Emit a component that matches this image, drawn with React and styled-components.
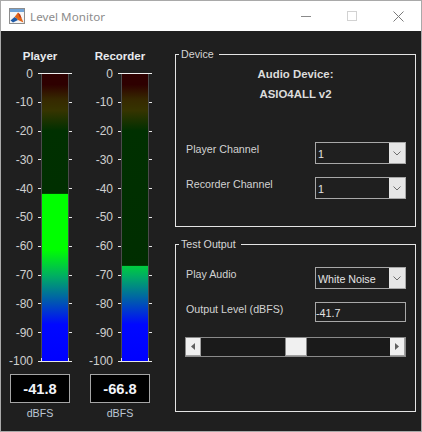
import React from "react";
import styled, { createGlobalStyle } from "styled-components";

const GlobalStyle = createGlobalStyle`
  html, body {
    margin: 0;
    padding: 0;
    background: #ffffff;
  }
  body {
    font-family: "Liberation Sans", Arial, sans-serif;
  }
`;

const meters = [
  { name: "Player", level: -41.8 },
  { name: "Recorder", level: -66.8 },
];
const ticks = [0, -10, -20, -30, -40, -50, -60, -70, -80, -90, -100];

const PLOT_H = 289;
const BAR_SPAN = 288;

const dimStops = [
  [0, "#2e0000"],
  [0.04, "#2e0000"],
  [0.09, "#362800"],
  [0.13, "#363400"],
  [0.2, "#003000"],
  [1, "#002c00"],
];
const brightStops = [
  [0, "#ff0000"],
  [0.1, "#ffff00"],
  [0.2, "#00ff00"],
  [0.61, "#00ff00"],
  [0.7, "#00b060"],
  [0.79, "#0058b0"],
  [0.87, "#0008ff"],
  [1, "#0000ff"],
];

function MeterPlot({ id, level }) {
  const fillTop = 0.5 + (-level / 100) * BAR_SPAN;
  return (
    <Plot width="34" height={PLOT_H} viewBox={`0 0 34 ${PLOT_H}`}>
      <defs>
        <linearGradient id={`dim-${id}`} gradientUnits="userSpaceOnUse" x1="0" y1="0" x2="0" y2={PLOT_H}>
          {dimStops.map(([o, c]) => <stop key={o} offset={o} stopColor={c} />)}
        </linearGradient>
        <linearGradient id={`lit-${id}`} gradientUnits="userSpaceOnUse" x1="0" y1="0" x2="0" y2={PLOT_H}>
          {brightStops.map(([o, c]) => <stop key={o} offset={o} stopColor={c} />)}
        </linearGradient>
      </defs>
      <rect x="3" y="0" width="28" height={PLOT_H} fill={`url(#dim-${id})`} />
      <rect x="3" y={fillTop} width="28" height={PLOT_H - fillTop} fill={`url(#lit-${id})`} />
      <line x1="3.5" y1="0" x2="3.5" y2="288" stroke="#4a4a4a" />
      <line x1="30.5" y1="0" x2="30.5" y2="288" stroke="#4a4a4a" />
      <line x1="0" y1="0.5" x2="34" y2="0.5" stroke="#f0f0f0" />
      {ticks.slice(1, -1).map((t, i) => {
        const y = Math.round((i + 1) * 28.8) + 0.5;
        return (
          <g key={t} stroke="#e6e6e6">
            <line x1="0" y1={y} x2="3" y2={y} />
            <line x1="31" y1={y} x2="34" y2={y} />
          </g>
        );
      })}
      <g stroke="#e6e6e6">
        <line x1="0" y1="288.5" x2="34" y2="288.5" />
        <line x1="3.5" y1="285" x2="3.5" y2="288" />
        <line x1="30.5" y1="285" x2="30.5" y2="288" />
      </g>
    </Plot>
  );
}

function Meter({ name, level }) {
  return (
    <MeterCol>
      <MeterLabel>{name}</MeterLabel>
      <Axis>
        <TickLabels>
          {ticks.map((t) => (
            <TickLabel key={t}>{t}</TickLabel>
          ))}
        </TickLabels>
        <MeterPlot id={name} level={level} />
      </Axis>
      <ValueBox>{level.toFixed(1)}</ValueBox>
      <Unit>dBFS</Unit>
    </MeterCol>
  );
}

function Chevron() {
  return (
    <svg width="8" height="5" viewBox="0 0 8 5">
      <polyline points="0.5,0.5 4,4 7.5,0.5" fill="none" stroke="#6e6e6e" strokeWidth="1" />
    </svg>
  );
}

function Dropdown({ value }) {
  return (
    <Select>
      <SelectText>{value}</SelectText>
      <SelectArrow>
        <Chevron />
      </SelectArrow>
    </Select>
  );
}

function Slider({ fraction }) {
  return (
    <SliderBox>
      <StepButton>
        <svg width="4" height="7" viewBox="0 0 4 7">
          <polygon points="4,0 0,3.5 4,7" fill="#606060" />
        </svg>
      </StepButton>
      <Track>
        <TrackSpace style={{ flexGrow: fraction }} />
        <Thumb />
        <TrackSpace style={{ flexGrow: 1 - fraction }} />
      </Track>
      <StepButton>
        <svg width="4" height="7" viewBox="0 0 4 7">
          <polygon points="0,0 4,3.5 0,7" fill="#606060" />
        </svg>
      </StepButton>
    </SliderBox>
  );
}

function MatlabIcon() {
  return (
    <svg width="16" height="16" viewBox="0 0 16 16">
      <rect x="0.5" y="0.5" width="15" height="15" fill="#f6f6f6" stroke="#8d8d8d" />
      <rect x="1" y="1" width="14" height="3" fill="#6fa3d8" />
      <polygon points="1.5,12.5 5.5,9 8,10.5 9,12 4,14.5" fill="#1f5aa6" />
      <polygon points="5.5,9 9,4.5 11,6.5 14.5,14.5 9,12 8,10.5" fill="#e2661b" />
      <polygon points="9,4.5 11,6.5 12.5,10 10.5,9" fill="#b8341a" />
    </svg>
  );
}

const App = () => {
  return (
    <>
      <GlobalStyle />
      <Window>
        <TitleBar>
          <MatlabIcon />
          <Title>Level Monitor</Title>
          <WinButtons>
            <WinButton>
              <svg width="10" height="1"><rect width="10" height="1" fill="#8a8a8a" /></svg>
            </WinButton>
            <WinButton>
              <svg width="10" height="10"><rect x="0.5" y="0.5" width="9" height="9" fill="none" stroke="#d2d2d2" /></svg>
            </WinButton>
            <WinButton>
              <svg width="11" height="11">
                <path d="M0.5 0.5 L10.5 10.5 M10.5 0.5 L0.5 10.5" stroke="#7a7a7a" strokeWidth="1" />
              </svg>
            </WinButton>
          </WinButtons>
        </TitleBar>
        <Body>
          <MeterGroup>
            {meters.map((m) => (
              <Meter key={m.name} {...m} />
            ))}
          </MeterGroup>
          <SideColumn>
            <Panel>
              <Legend>Device</Legend>
              <DeviceInfo>
                <div>Audio Device:</div>
                <div>ASIO4ALL v2</div>
              </DeviceInfo>
              <FormGrid $top={38} $bottom={27}>
                <FieldLabel>Player Channel</FieldLabel>
                <Dropdown value="1" />
                <FieldLabel>Recorder Channel</FieldLabel>
                <Dropdown value="1" />
              </FormGrid>
            </Panel>
            <Panel $gap={11}>
              <Legend>Test Output</Legend>
              <FormGrid $top={16} $bottom={0}>
                <FieldLabel>Play Audio</FieldLabel>
                <Dropdown value="White Noise" />
                <FieldLabel>Output Level (dBFS)</FieldLabel>
                <TextField>-41.7</TextField>
              </FormGrid>
              <Slider fraction={0.5} />
            </Panel>
          </SideColumn>
        </Body>
      </Window>
    </>
  );
};

const Window = styled.div`
  width: 422px;
  height: 432px;
  box-sizing: border-box;
  border: 1px solid #a9a9a9;
  display: flex;
  flex-direction: column;
  overflow: hidden;
`;

const TitleBar = styled.div`
  height: 30px;
  flex-shrink: 0;
  background: #ffffff;
  display: flex;
  align-items: center;
  padding-left: 8px;
  padding-top: 0px;
`;

const Title = styled.span`
  margin-left: 5px;
  font-family: "Noto Sans", "Open Sans", sans-serif;
  font-size: 11.6px;
  color: #8c8c8c;
  letter-spacing: 0.05px;
`;

const WinButtons = styled.div`
  margin-left: auto;
  display: flex;
  height: 100%;
`;

const WinButton = styled.div`
  width: 46px;
  height: 100%;
  display: flex;
  align-items: center;
  justify-content: center;
`;

const Body = styled.div`
  flex: 1;
  background: #1f1f1f;
  display: flex;
  padding-left: 9px;
  gap: 25px;
`;

const MeterGroup = styled.div`
  display: flex;
  gap: 20px;
`;

const MeterCol = styled.div`
  width: 60px;
  display: flex;
  flex-direction: column;
`;

const MeterLabel = styled.div`
  margin-top: 18px;
  font-size: 11.5px;
  font-weight: bold;
  line-height: 14px;
  text-align: center;
  color: #e8eaee;
`;

const Axis = styled.div`
  margin-top: 10px;
  display: flex;
  height: ${PLOT_H}px;
`;

const TickLabels = styled.div`
  width: 23px;
  flex-shrink: 0;
  display: flex;
  flex-direction: column;
  justify-content: space-between;
  padding: 0.5px 0;
  box-sizing: border-box;
`;

const TickLabel = styled.div`
  height: 0;
  display: flex;
  align-items: center;
  justify-content: flex-end;
  font-size: 12px;
  line-height: 14px;
  color: #cfcfcf;
  white-space: nowrap;
`;

const Plot = styled.svg`
  margin-left: 5px;
  flex-shrink: 0;
  display: block;
`;

const ValueBox = styled.div`
  margin-top: 12px;
  height: 29px;
  box-sizing: border-box;
  border: 1px solid #a6a6a6;
  background: #000000;
  display: flex;
  align-items: center;
  justify-content: center;
  font-size: 14.7px;
  font-weight: bold;
  color: #f2f4f8;
`;

const Unit = styled.div`
  margin-top: 3px;
  font-size: 10.7px;
  line-height: 14px;
  text-align: center;
  color: #bcc6d4;
`;

const SideColumn = styled.div`
  width: 241px;
  display: flex;
  flex-direction: column;
  padding-top: 17px;
`;

const Panel = styled.fieldset`
  margin: ${(p) => p.$gap || 0}px 0 0 0;
  padding: 0 0 0 10px;
  min-width: 0;
  border: 1px solid #e4e4e4;
  display: flex;
  flex-direction: column;
  &:last-child {
    padding-bottom: 54px;
  }
`;

const Legend = styled.legend`
  margin-left: -7px;
  padding: 0 5px 0 2px;
  font-size: 10.7px;
  line-height: 13px;
  color: #d6d6d6;
`;

const DeviceInfo = styled.div`
  padding-top: 3px;
  padding-right: 10px;
  font-size: 11.4px;
  font-weight: bold;
  line-height: 20px;
  text-align: center;
  color: #dcdcdc;
`;

const FormGrid = styled.div`
  margin-top: ${(p) => p.$top}px;
  margin-bottom: ${(p) => p.$bottom}px;
  display: grid;
  grid-template-columns: 129px 91px;
  row-gap: 13px;
  align-items: start;
`;

const FieldLabel = styled.div`
  padding-top: 1px;
  font-size: 10.7px;
  line-height: 13px;
  color: #d2d2d2;
  white-space: nowrap;
`;

const Select = styled.div`
  height: 22px;
  box-sizing: border-box;
  border: 1px solid #a8a8a8;
  background: #1f1f1f;
  display: flex;
`;

const SelectText = styled.div`
  flex: 1;
  padding: 3px 0 0 2px;
  font-size: 10.7px;
  line-height: 16px;
  color: #e4e4e4;
  white-space: nowrap;
  overflow: hidden;
`;

const SelectArrow = styled.div`
  width: 16px;
  background: #e6e6e6;
  display: flex;
  align-items: center;
  justify-content: center;
`;

const TextField = styled.div`
  height: 20px;
  box-sizing: border-box;
  border: 1px solid #a8a8a8;
  background: #1f1f1f;
  padding: 2px 0 0 0;
  font-size: 10.7px;
  line-height: 16px;
  color: #e4e4e4;
`;

const SliderBox = styled.div`
  margin: 15px 0 0 -1px;
  width: 221px;
  height: 20px;
  box-sizing: border-box;
  border: 1px solid #8a8a8a;
  background: #1a1a1a;
  display: flex;
`;

const StepButton = styled.div`
  width: 15px;
  box-sizing: border-box;
  background: #f0f0f0;
  border-right: 1px solid #a0a0a0;
  border-bottom: 1px solid #a0a0a0;
  display: flex;
  align-items: center;
  justify-content: center;
`;

const Track = styled.div`
  flex: 1;
  display: flex;
`;

const TrackSpace = styled.div`
  flex-basis: 0;
`;

const Thumb = styled.div`
  width: 22px;
  box-sizing: border-box;
  background: #f0f0f0;
  border-left: 1px solid #8a8a8a;
  border-right: 1px solid #8a8a8a;
  border-bottom: 1px solid #a0a0a0;
`;

export default App;
